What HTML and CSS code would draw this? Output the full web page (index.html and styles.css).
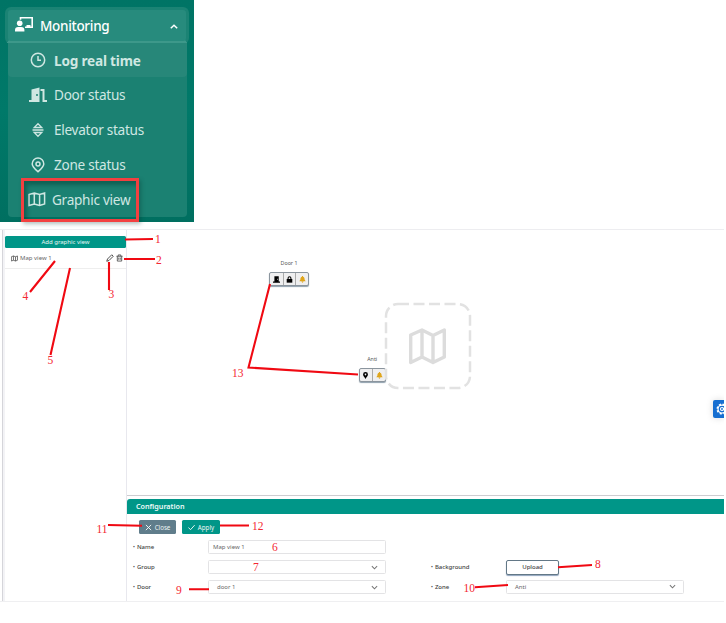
FILE: index.html
```html
<!DOCTYPE html>
<html lang="en">
<head>
<meta charset="utf-8">
<title>Graphic view</title>
<link rel="stylesheet" href="styles.css">
</head>
<body>
<nav class="sidebar">
  <div class="menu-head">
    <svg class="head-icon" viewBox="0 0 18 15"><path d="M5.500 2.700V.8h11.700v9.400H10" fill="none" stroke="currentColor" stroke-width="1.600"/><path d="M11.500 8h4v2h-4z" fill="currentColor"/><circle cx="4.700" cy="6.200" r="2.800" fill="currentColor"/><path d="M0 14.500v-1.400Q0 10 3.200 10h3Q9.400 10 9.400 13.100v1.400z" fill="currentColor"/></svg>
    <span class="head-label">Monitoring</span>
    <svg class="caret" viewBox="0 0 8 5"><path d="M.8 4.300 4 1.200l3.200 3.100" fill="none" stroke="currentColor" stroke-width="1.500"/></svg>
  </div>
  <ul class="submenu">
    <li class="item active">
      <svg class="icon" viewBox="0 0 16 16"><circle cx="8" cy="8" r="6.700"/><path d="M8 4v4.300h3"/></svg><span>Log real time</span>
    </li>
    <li class="item">
      <svg class="icon wide" viewBox="0 0 18 16"><path d="M2.500 13V2.500L10.500.5V15H0v-2z" fill="currentColor" stroke="none"/><path d="M11.500 3h3v11H18" stroke-width="2"/><path d="M8 7v2" stroke="#1b8071"/></svg><span>Door status</span>
    </li>
    <li class="item">
      <svg class="icon" viewBox="0 0 16 16"><path d="M8 1.700 11.800 5.500H4.200zM8 14.300 11.800 10.500H4.200zM2.500 8h11" stroke-width="1.300"/></svg><span>Elevator status</span>
    </li>
    <li class="item">
      <svg class="icon" viewBox="0 0 16 16"><path d="M8 14.700C5 12 2.200 9.600 2.200 6.900a5.800 5.800 0 0 1 11.600 0C13.800 9.600 11 12 8 14.700z"/><circle cx="8" cy="7" r="2"/></svg><span>Zone status</span>
    </li>
    <li class="item graphic">
      <svg class="icon wide" viewBox="0 0 18 16"><path d="M1 2.500 6.300 1l5.300 1.500 5-1.500v11l-5 1.500-5.300-1.500L1 13.500zM6.300 1v11M11.600 2.500v11"/></svg><span>Graphic view</span>
    </li>
  </ul>
  <div class="highlight"></div>
</nav>

<main class="app">
  <aside class="views">
    <button class="add">Add graphic view</button>
    <div class="view-row">
      <svg class="mini-map" viewBox="0 0 18 16"><path d="M1 3.500 6.300 1.500l5.300 2 5-2v11l-5 2-5.300-2-5.300 2zM6.300 1.500v11M11.600 3.500v11"/></svg>
      <span class="view-name">Map view 1</span>
      <svg class="pencil" viewBox="0 0 16 16"><path d="M1.500 14.500 3 10 11.500 1.500l3 3L6 13z"/></svg>
      <svg class="trash" viewBox="0 0 16 16"><path d="M1 4h14M5 4V1h6v3M3 4v11h10V4M6.300 7v5M9.700 7v5"/></svg>
    </div>
  </aside>
  <section class="work">
    <div class="canvas">
      <div class="node door">
        <span class="node-label">Door 1</span>
        <div class="tools">
          <i><svg viewBox="0 0 10 10"><path d="M2 .5h6.200V8H10v1.500H0V8h2z"/><path d="M6.500 4v1.500" stroke="#eee"/></svg></i>
          <i><svg viewBox="0 0 10 10"><path d="M1 4.300h8v5.200H1z"/><path d="M3 5V3a2 2 0 0 1 4 0v2" fill="none" stroke="#000" stroke-width="1.500"/></svg></i>
          <i><svg class="bell" viewBox="0 0 10 10"><path d="M4.300 0h1.400v1C7.500 1.300 8 3 8 5l1.500 2.500h-9L2 5c0-2 .5-3.700 2.300-4zM3.500 8h3Q6 9.600 5 9.600T3.500 8z"/></svg></i>
        </div>
      </div>
      <div class="node anti">
        <span class="node-label">Anti</span>
        <div class="tools">
          <i><svg viewBox="0 0 10 10"><path fill-rule="evenodd" d="M5 10C4 7.500 1.500 6 1.500 3.500a3.500 3.500 0 0 1 7 0C8.500 6 6 7.500 5 10zM5 2.300a1.200 1.200 0 1 0 .01 0z"/></svg></i>
          <i><svg class="bell" viewBox="0 0 10 10"><path d="M4.300 0h1.400v1C7.500 1.300 8 3 8 5l1.500 2.500h-9L2 5c0-2 .5-3.700 2.300-4zM3.500 8h3Q6 9.600 5 9.600T3.500 8z"/></svg></i>
        </div>
      </div>
      <svg class="placeholder" viewBox="0 0 88 88"><rect x="2" y="2" width="84" height="84" rx="12" fill="none" stroke="#e2e2e2" stroke-width="2.500" stroke-dasharray="11 4.500"/><path d="M26.700 33 38 28l11 5.500L60.300 28v27L49 60.500 38 55l-11.300 5.500zM38 28v27M49 33.500v27" fill="none" stroke="#dcdcdc" stroke-width="3.400" stroke-linejoin="round"/></svg>
      <button class="settings"><svg viewBox="0 0 16 16"><circle cx="8" cy="8" r="6.300" stroke-width="2.200" stroke-dasharray="2.800 2.150"/><circle cx="8" cy="8" r="5.300"/><circle cx="8" cy="8" r="2"/></svg></button>
    </div>
    <div class="config">
      <h2>Configuration</h2>
      <div class="actions">
        <button class="btn close"><svg viewBox="0 0 8 8"><path d="m1 1 6 6M7 1 1 7"/></svg>Close</button>
        <button class="btn apply"><svg viewBox="0 0 8 8"><path d="m.5 4 2.400 2.500L7.600 1.300"/></svg>Apply</button>
      </div>
      <div class="form">
        <label>Name</label><div class="field">Map view 1</div><span></span><span></span>
        <label>Group</label><div class="field"><svg viewBox="0 0 8 5"><path d="m1 1 3 3 3-3"/></svg></div><label>Background</label><button class="upload">Upload</button>
        <label>Door</label><div class="field select">door 1<svg viewBox="0 0 8 5"><path d="m1 1 3 3 3-3"/></svg></div><label>Zone</label><div class="field select zone">Anti<svg viewBox="0 0 8 5"><path d="m1 1 3 3 3-3"/></svg></div>
      </div>
    </div>
  </section>
</main>

<svg class="callouts" viewBox="0 0 726 623">
  <path d="M125 239.500 153 239M124 259h31M109 262v28M55 261 30 292M70 268 50.500 355M270 284 248.500 367.500 358 374.500M108 525l34 .8M220 525.500h29M189 589.300h20M558 567.200 592 565M475 587.300 508 585"/>
  <g>
    <text x="155" y="243">1</text><text x="156" y="263.500">2</text><text x="108.500" y="297.500">3</text><text x="22.500" y="300">4</text><text x="47.500" y="363.500">5</text>
    <text x="232" y="377">13</text><text x="96.500" y="533">11</text><text x="252" y="530">12</text><text x="272" y="551">6</text><text x="253" y="571">7</text><text x="595" y="567.500">8</text><text x="176" y="593.500">9</text><text x="463.500" y="592">10</text>
  </g>
</svg>
</body>
</html>
```
FILE: styles.css
```css
* { box-sizing: border-box; }
body {
  margin: 0;
  width: 726px;
  height: 623px;
  overflow: hidden;
  position: relative;
  background: #fff;
  font-family: "Noto Sans", "Open Sans", sans-serif;
}
button { font: inherit; border: 0; padding: 0; margin: 0; }
svg { display: block; flex: none; }

.sidebar {
  position: relative;
  width: 194px;
  height: 222px;
  padding: 7px 5px 0;
  background: linear-gradient(#007465, #007969 50%, #006f60);
  color: #fff;
}
.menu-head {
  display: flex;
  align-items: center;
  height: 37px;
  padding: 0 8px 0 7px;
  border: 3px solid #1b8374;
  border-bottom-color: #3d988a;
  border-radius: 6px;
  background: #278b7d;
}
.head-icon { width: 18px; height: 15px; margin-top: -2px; }
.head-label { margin: 1px 0 0 7px; font-size: 13.500px; font-weight: 500; white-space: nowrap; letter-spacing: -0.300px; }
.caret { width: 8px; height: 5px; margin-left: auto; margin-top: 2px; }
.submenu {
  list-style: none;
  margin: -1px 2px 0 3px;
  padding: 0;
  height: 174px;
  background: #1b8172;
  border-radius: 0 0 4px 4px;
  color: #cfe7e2;
}
.item {
  display: flex;
  align-items: center;
  height: 35px;
  padding-left: 22px;
  font-size: 13.600px;
  letter-spacing: -0.280px;
  white-space: nowrap;
}
.item.active { height: 34px; background: #278779; border-radius: 0 0 4px 4px; font-weight: 700; letter-spacing: -0.200px; }
.icon { width: 16px; height: 16px; fill: none; stroke: currentColor; stroke-width: 1.500; margin-right: 8px; }
.icon.wide { width: 18px; margin-left: -1px; margin-right: 7px; }
.item.graphic .icon { margin-left: -2px; margin-right: 6px; }
.highlight {
  position: absolute;
  left: 21px;
  top: 178px;
  width: 118px;
  height: 44px;
  border: 3px solid #f24040;
  box-shadow: inset 3px 4px 4px rgba(0, 55, 45, .45), 2px 2px 4px rgba(0, 45, 40, .3);
}

.app {
  display: flex;
  width: 724px;
  height: 373px;
  margin-top: 7px;
  padding-left: 2px;
  border-top: 1px solid #ededf0;
  border-bottom: 1px solid #efeff1;
}
.views {
  width: 125px;
  border-left: 1px solid #d5d5da;
  border-right: 1px solid #e8e8ee;
  box-shadow: inset 2px 0 #f3f3f6;
  padding: 6px 0 0 2px;
}
.add {
  display: block;
  width: 121px;
  height: 12px;
  border-radius: 1.500px;
  background: #009688;
  color: #e7f7f4;
  font-size: 6px;
  line-height: 11px;
}
.view-row {
  display: flex;
  align-items: center;
  height: 21px;
  padding: 0 3px 0 6px;
  border-bottom: 1px solid #eee;
  color: #666;
  font-size: 6px;
}
.view-row svg { fill: none; stroke: #505050; stroke-width: 2; }
.mini-map { width: 7px; height: 7px; margin-right: 2px; }
.view-name { flex: 1; }
.pencil { width: 8px; height: 8px; margin-right: 2px; }
.trash { width: 7px; height: 8px; }

.work { flex: 1; min-width: 0; display: flex; flex-direction: column; }
.canvas { position: relative; height: 266px; border-bottom: 1px solid #cdcdd1; overflow: hidden; }
.node { position: absolute; display: flex; flex-direction: column; align-items: center; }
.node.door { left: 142px; top: 29px; }
.node.anti { left: 231.500px; top: 125px; }
.node-label { height: 8px; margin-bottom: 5px; color: #555; font-size: 5.300px; line-height: 8px; }
.tools {
  display: flex;
  border: 1px solid #8b959e;
  border-radius: 2px;
  background: #efeff0;
  box-shadow: 0 1px 1px #90a0ad;
}
.tools i { display: flex; align-items: center; justify-content: center; width: 12.700px; height: 12px; }
.tools i + i { border-left: 1px solid #aaa; }
.tools svg { width: 7px; height: 7px; }
.bell { fill: #dfa51c; }
.placeholder { position: absolute; left: 257px; top: 72px; width: 88px; height: 88px; }
.settings {
  position: absolute;
  right: 0;
  top: 170px;
  width: 11px;
  height: 18px;
  padding: 3px 0 0 3px;
  overflow: hidden;
  border-radius: 2px 0 0 2px;
  background: #176fd1;
  box-shadow: 0 0 7px rgba(0, 0, 0, .15);
  display: flex;
  justify-content: flex-start;
  align-items: flex-start;
}
.settings svg { width: 12px; height: 12px; fill: none; stroke: #fff; stroke-width: 1.600; }

.config { margin-top: 3px; color: #444; font-size: 6px; }
.config h2 {
  height: 15px;
  margin: 0;
  padding-left: 9px;
  border-radius: 3px 0 0 0;
  background: #009688;
  color: #eefaf8;
  font-size: 7.200px;
  font-weight: 600;
  line-height: 15px;
}
.actions { display: flex; gap: 6px; padding: 6px 0 0 12px; }
.btn {
  display: flex;
  align-items: center;
  justify-content: center;
  width: 37px;
  height: 14px;
  border-radius: 1.500px;
  color: #eef5f5;
  font-size: 6.200px;
}
.btn.apply { width: 38px; }
.btn.close { background: #607d8b; }
.btn.apply { background: #009688; }
.btn svg { width: 7px; height: 7px; margin-right: 3px; fill: none; stroke: #fff; stroke-width: 1; }
.form {
  display: grid;
  grid-template-columns: 75px 178px 120px 178px;
  grid-template-rows: 14px 14px 14px;
  row-gap: 6px;
  padding: 6px 0 0 6px;
  align-items: center;
}
.form label { white-space: nowrap; font-weight: 500; }
.form label::before { content: "•"; font-size: 5px; margin-right: 2px; }
.form label:nth-of-type(3), .form label:nth-of-type(5) { padding-left: 45px; }
.field {
  display: flex;
  align-items: center;
  justify-content: space-between;
  height: 14px;
  padding: 0 7px 0 4px;
  border: 1px solid #e3e3e5;
  border-radius: 1.500px;
  color: #666;
}
.field.select { padding-left: 8px; }
.field.zone { padding-bottom: 1px; }
.field svg { width: 7px; height: 5px; margin-left: auto; fill: none; stroke: #777; stroke-width: 1.200; }
.upload {
  width: 53px;
  height: 15px;
  border: 1px solid #637887;
  border-radius: 2px;
  background: #fff;
  box-shadow: 0 1px 1px #8fa3bd;
  color: #444;
  font-weight: 500;
}

.callouts { position: absolute; left: 0; top: 0; width: 726px; height: 623px; pointer-events: none; }
.callouts path { fill: none; stroke: #f00912; stroke-width: 2.100; }
.callouts text { fill: #f32732; font-family: "Liberation Serif", serif; font-size: 11.500px; }
```
